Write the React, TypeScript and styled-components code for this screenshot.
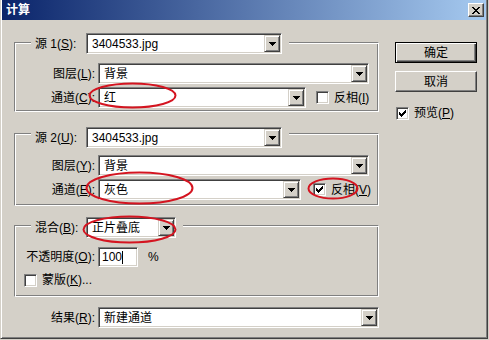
import styled, { createGlobalStyle } from "styled-components";

const GlobalStyle = createGlobalStyle`
  html, body {
    margin: 0;
    padding: 0;
    background: #d4d0c8;
  }
  body {
    font-family: "Liberation Sans", "Noto Sans CJK SC", sans-serif;
    font-size: 12px;
    color: #000;
  }
`;

const Window = styled.div`
  position: relative;
  width: 488px;
  height: 339px;
  box-sizing: border-box;
  background: #d4d0c8;
  border-left: 1px solid #d4d0c8;
  border-right: 1px solid #404040;
  border-bottom: 1px solid #404040;
  box-shadow: inset 1px 0 #fff, inset -1px -1px #808080;
  display: flex;
  flex-direction: column;
`;

const TitleBar = styled.div`
  height: 20px;
  margin: 0 1px;
  padding: 0 2px 0 4px;
  display: flex;
  align-items: center;
  justify-content: space-between;
  background: linear-gradient(to right, #0a246a, #a6caf0);
  color: #fff;
  font-weight: bold;
  line-height: 14px;
`;

const CloseButton = styled.div`
  width: 16px;
  height: 14px;
  box-sizing: border-box;
  background: #d4d0c8;
  border: 1px solid;
  border-color: #fff #404040 #404040 #fff;
  box-shadow: inset -1px -1px #808080;
  display: flex;
  align-items: center;
  justify-content: center;
`;

const Body = styled.div`
  display: flex;
  gap: 16px;
  padding-left: 13px;
`;

const LeftCol = styled.div`
  width: 365px;
  display: flex;
  flex-direction: column;
`;

const RightCol = styled.div`
  width: 82px;
  padding-top: 22px;
  display: flex;
  flex-direction: column;
`;

const GroupBox = styled.div<{ $mt: number; $pb: number }>`
  margin-top: ${(p) => p.$mt}px;
  padding-bottom: ${(p) => p.$pb}px;
  border: 1px solid;
  border-color: #808080 #fff #fff #808080;
  box-shadow: inset 1px 1px #fff, inset -1px -1px #808080;
  display: flex;
  flex-direction: column;
`;

const Legend = styled.div<{ $lift: number }>`
  align-self: flex-start;
  margin: -${(p) => p.$lift}px 0 0 16px;
  padding: 0 7px 0 4px;
  background: #d4d0c8;
  display: flex;
  align-items: center;
  gap: 3px;
`;

const LegendLabel = styled.span`
  width: 48px;
  white-space: nowrap;
  line-height: 14px;
`;

const Row = styled.div<{ $mt: number; $pl?: number }>`
  margin-top: ${(p) => p.$mt}px;
  padding-left: ${(p) => p.$pl ?? 0}px;
  display: flex;
  align-items: center;
`;

const FieldLabel = styled.span`
  width: 80px;
  margin-right: 3px;
  text-align: right;
  white-space: nowrap;
  line-height: 14px;
`;

const Combo = styled.div<{ $w: number }>`
  width: ${(p) => p.$w}px;
  height: 21px;
  box-sizing: border-box;
  padding: 1px;
  border: 1px solid;
  border-color: #808080 #fff #fff #808080;
  box-shadow: inset 1px 1px #404040, inset -1px -1px #d4d0c8;
  background: #fff;
  display: flex;
`;

const ComboText = styled.span`
  flex: 1;
  padding: 1px 0 0 4px;
  display: flex;
  align-items: center;
  white-space: nowrap;
  line-height: 14px;
`;

const ComboButton = styled.div`
  width: 16px;
  box-sizing: border-box;
  background: #d4d0c8;
  border: 1px solid;
  border-color: #d4d0c8 #404040 #404040 #d4d0c8;
  box-shadow: inset 1px 1px #fff, inset -1px -1px #808080;
  display: flex;
  align-items: center;
  justify-content: center;
`;

const TextInput = styled.div`
  width: 40px;
  height: 20px;
  box-sizing: border-box;
  border: 1px solid;
  border-color: #808080 #fff #fff #808080;
  box-shadow: inset 1px 1px #404040, inset -1px -1px #d4d0c8;
  background: #fff;
  padding: 0 0 0 3px;
  display: flex;
  align-items: center;
  line-height: 14px;
`;

const Caret = styled.span`
  width: 1px;
  height: 13px;
  background: #000;
`;

const Unit = styled.span`
  margin-left: 10px;
  line-height: 14px;
`;

const CheckLabel = styled.label<{ $ml?: number }>`
  margin-left: ${(p) => p.$ml ?? 0}px;
  display: flex;
  align-items: center;
  gap: 5px;
  white-space: nowrap;
  line-height: 14px;
`;

const Box = styled.span`
  width: 13px;
  height: 13px;
  box-sizing: border-box;
  border: 1px solid;
  border-color: #808080 #fff #fff #808080;
  box-shadow: inset 1px 1px #404040, inset -1px -1px #d4d0c8;
  background: #fff;
  display: flex;
  align-items: center;
  justify-content: center;
`;

const PushButton = styled.div<{ $default?: boolean; $mt: number }>`
  margin-top: ${(p) => p.$mt}px;
  height: 21px;
  box-sizing: border-box;
  background: #d4d0c8;
  border: 1px solid;
  border-color: ${(p) => (p.$default ? "#000" : "#fff #404040 #404040 #fff")};
  box-shadow: ${(p) =>
    p.$default
      ? "inset 1px 1px #fff, inset -1px -1px #404040, inset -2px -2px #808080"
      : "inset -1px -1px #808080"};
  display: flex;
  align-items: center;
  justify-content: center;
  line-height: 14px;
`;

const Annotations = styled.svg`
  position: absolute;
  left: 0;
  top: 0;
  pointer-events: none;
`;

const Arrow = () => (
  <svg width="7" height="4" shapeRendering="crispEdges">
    <rect x="0" y="0" width="7" height="1" fill="#000" />
    <rect x="1" y="1" width="5" height="1" fill="#000" />
    <rect x="2" y="2" width="3" height="1" fill="#000" />
    <rect x="3" y="3" width="1" height="1" fill="#000" />
  </svg>
);

const Tick = () => (
  <svg width="7" height="7" shapeRendering="crispEdges">
    <path d="M6 0h1v3h-1zM5 1h1v3h-1zM4 2h1v3h-1zM3 3h1v3h-1zM2 4h1v3h-1zM1 3h1v3h-1zM0 2h1v3h-1z" fill="#000" />
  </svg>
);

const CloseGlyph = () => (
  <svg width="8" height="7" shapeRendering="crispEdges">
    <path d="M0 0h2v1h-2zM6 0h2v1h-2zM1 1h2v1h-2zM5 1h2v1h-2zM2 2h4v1h-4zM3 3h2v1h-2zM2 4h4v1h-4zM1 5h2v1h-2zM5 5h2v1h-2zM0 6h2v1h-2zM6 6h2v1h-2z" fill="#000" />
  </svg>
);

const Select = ({ w, value }: { w: number; value: string }) => (
  <Combo $w={w}>
    <ComboText>{value}</ComboText>
    <ComboButton>
      <Arrow />
    </ComboButton>
  </Combo>
);

const Check = ({ checked, children, ml }: { checked?: boolean; children: any; ml?: number }) => (
  <CheckLabel $ml={ml}>
    <Box>{checked && <Tick />}</Box>
    <span>{children}</span>
  </CheckLabel>
);

export default function App() {
  return (
    <>
      <GlobalStyle />
      <Window>
        <TitleBar>
          <span>计算</span>
          <CloseButton>
            <CloseGlyph />
          </CloseButton>
        </TitleBar>
        <Body>
          <LeftCol>
            <GroupBox $mt={22} $pb={3}>
              <Legend $lift={10}>
                <LegendLabel>
                  源 1(<u>S</u>):
                </LegendLabel>
                <Select w={196} value="3404533.jpg" />
              </Legend>
              <Row $mt={9}>
                <FieldLabel>
                  图层(<u>L</u>):
                </FieldLabel>
                <Select w={271} value="背景" />
              </Row>
              <Row $mt={3}>
                <FieldLabel>
                  通道(<u>C</u>):
                </FieldLabel>
                <Select w={208} value="红" />
                <Check ml={10}>
                  反相(<u>I</u>)
                </Check>
              </Row>
            </GroupBox>

            <GroupBox $mt={21} $pb={5}>
              <Legend $lift={7}>
                <LegendLabel>
                  源 2(<u>U</u>):
                </LegendLabel>
                <Select w={196} value="3404533.jpg" />
              </Legend>
              <Row $mt={7}>
                <FieldLabel>
                  图层(<u>Y</u>):
                </FieldLabel>
                <Select w={271} value="背景" />
              </Row>
              <Row $mt={3}>
                <FieldLabel>
                  通道(<u>E</u>):
                </FieldLabel>
                <Select w={203} value="灰色" />
                <Check checked ml={12}>
                  反相(<u>V</u>)
                </Check>
              </Row>
            </GroupBox>

            <GroupBox $mt={19} $pb={9}>
              <Legend $lift={9}>
                <LegendLabel>
                  混合(<u>B</u>):
                </LegendLabel>
                <Select w={90} value="正片叠底" />
              </Legend>
              <Row $mt={9}>
                <FieldLabel>
                  不透明度(<u>O</u>):
                </FieldLabel>
                <TextInput>
                  100
                  <Caret />
                </TextInput>
                <Unit>%</Unit>
              </Row>
              <Row $mt={6} $pl={9}>
                <Check>
                  蒙版(<u>K</u>)...
                </Check>
              </Row>
            </GroupBox>

            <Row $mt={10} $pl={1}>
              <FieldLabel>
                结果(<u>R</u>):
              </FieldLabel>
              <Select w={281} value="新建通道" />
            </Row>
          </LeftCol>

          <RightCol>
            <PushButton $default $mt={0}>
              确定
            </PushButton>
            <PushButton $mt={8}>取消</PushButton>
            <Row $mt={14} $pl={1}>
              <Check checked>
                预览(<u>P</u>)
              </Check>
            </Row>
          </RightCol>
        </Body>

        <Annotations width="489" height="340">
          <g fill="none" stroke="#d41420" strokeWidth="2">
            <ellipse cx="131.5" cy="95.5" rx="43" ry="12" />
            <ellipse cx="138.5" cy="188" rx="53" ry="15.5" />
            <ellipse cx="332" cy="188.5" rx="24.5" ry="10" />
            <ellipse cx="128.5" cy="229.5" rx="46" ry="13" />
          </g>
        </Annotations>
      </Window>
    </>
  );
}
